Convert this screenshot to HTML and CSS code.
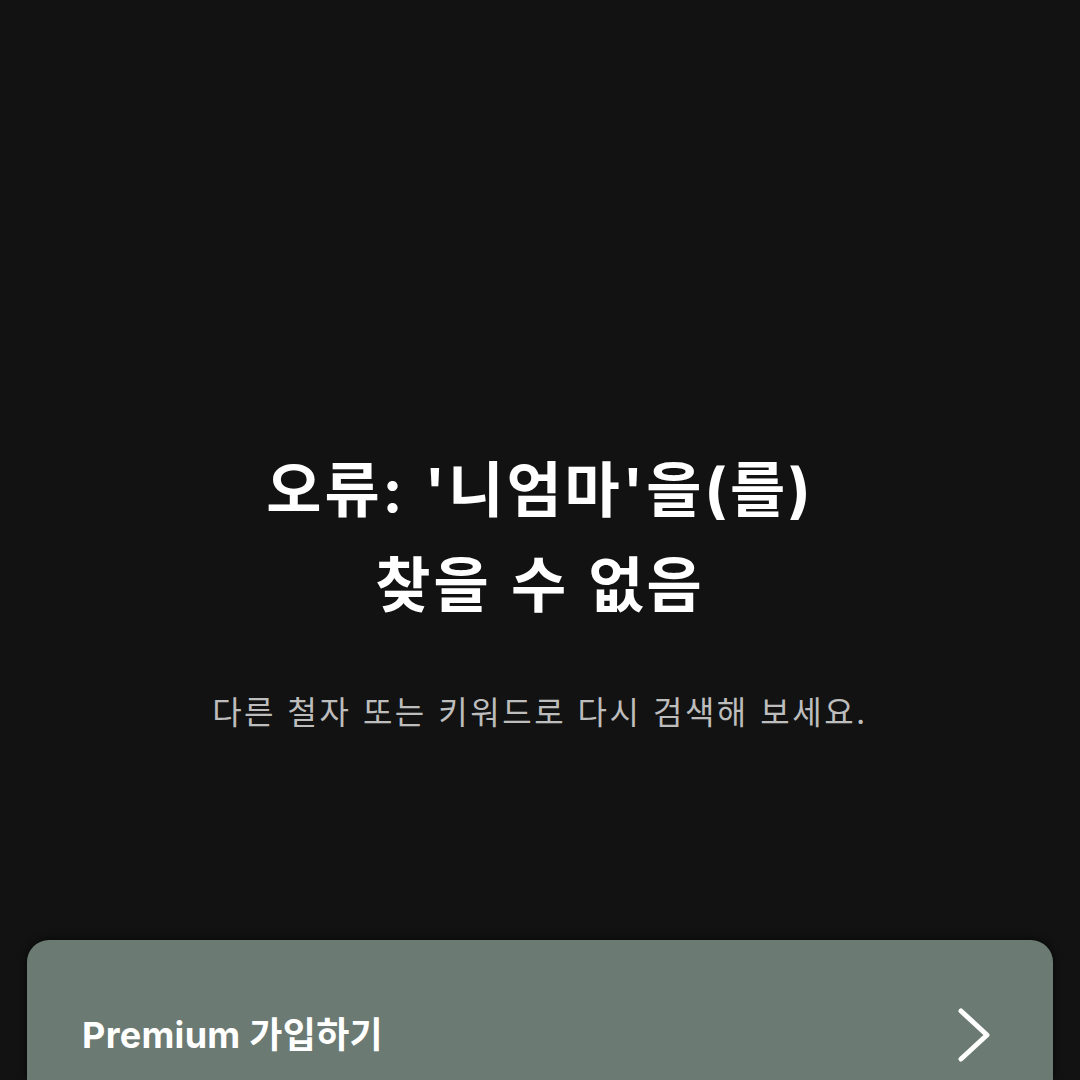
FILE: index.html
```html
<!DOCTYPE html>
<html lang="ko">
<head>
  <meta charset="UTF-8">
  <title>검색 결과 없음</title>
  <link rel="stylesheet" href="styles.css">
</head>
<body>
  <main class="empty">
    <h1 class="empty-title">오류: '니엄마'을(를)<br>찾을 수 없음</h1>
    <p class="empty-hint">다른 철자 또는 키워드로 다시 검색해 보세요.</p>
  </main>

  <div class="promo">
    <span class="promo-label">Premium 가입하기</span>
    <svg class="promo-arrow" width="34" height="56" viewBox="0 0 34 56">
      <path d="M4 4 L30 28 L4 52" fill="none" stroke="#fff" stroke-width="5" stroke-linecap="round" stroke-linejoin="round"/>
    </svg>
  </div>
</body>
</html>
```

FILE: styles.css
```css
html, body {
  margin: 0;
  height: 100%;
}
body {
  background: #121212;
  color: #fff;
  font-family: Inter, "Noto Sans CJK KR", sans-serif;
  overflow: hidden;
}
.empty {
  padding-top: 443px;
  height: 940px;
  box-sizing: border-box;
  text-align: center;
}
.empty-title {
  margin: 0;
  font-size: 60px;
  line-height: 95px;
  font-weight: 700;
  letter-spacing: 3px;
  word-spacing: 2px;
}
.empty-hint {
  margin: 58px 0 0;
  font-size: 32px;
  line-height: 44px;
  color: #bdbdbd;
  font-weight: 400;
  letter-spacing: 2.5px;
  word-spacing: 0;
}
.promo {
  margin: 0 27px;
  height: 140px;
  background: #6b7a72;
  border-radius: 22px 22px 0 0;
  box-shadow: 0 0 8px rgba(0, 0, 0, 0.7);
  display: flex;
  align-items: flex-start;
  justify-content: space-between;
  padding: 70px 62px 0 55px;
  box-sizing: border-box;
}
.promo-label {
  font-size: 36px;
  font-weight: 700;
  line-height: 50px;
  letter-spacing: 0.3px;
}
.promo-arrow {
  margin-top: -3px;
}
```
